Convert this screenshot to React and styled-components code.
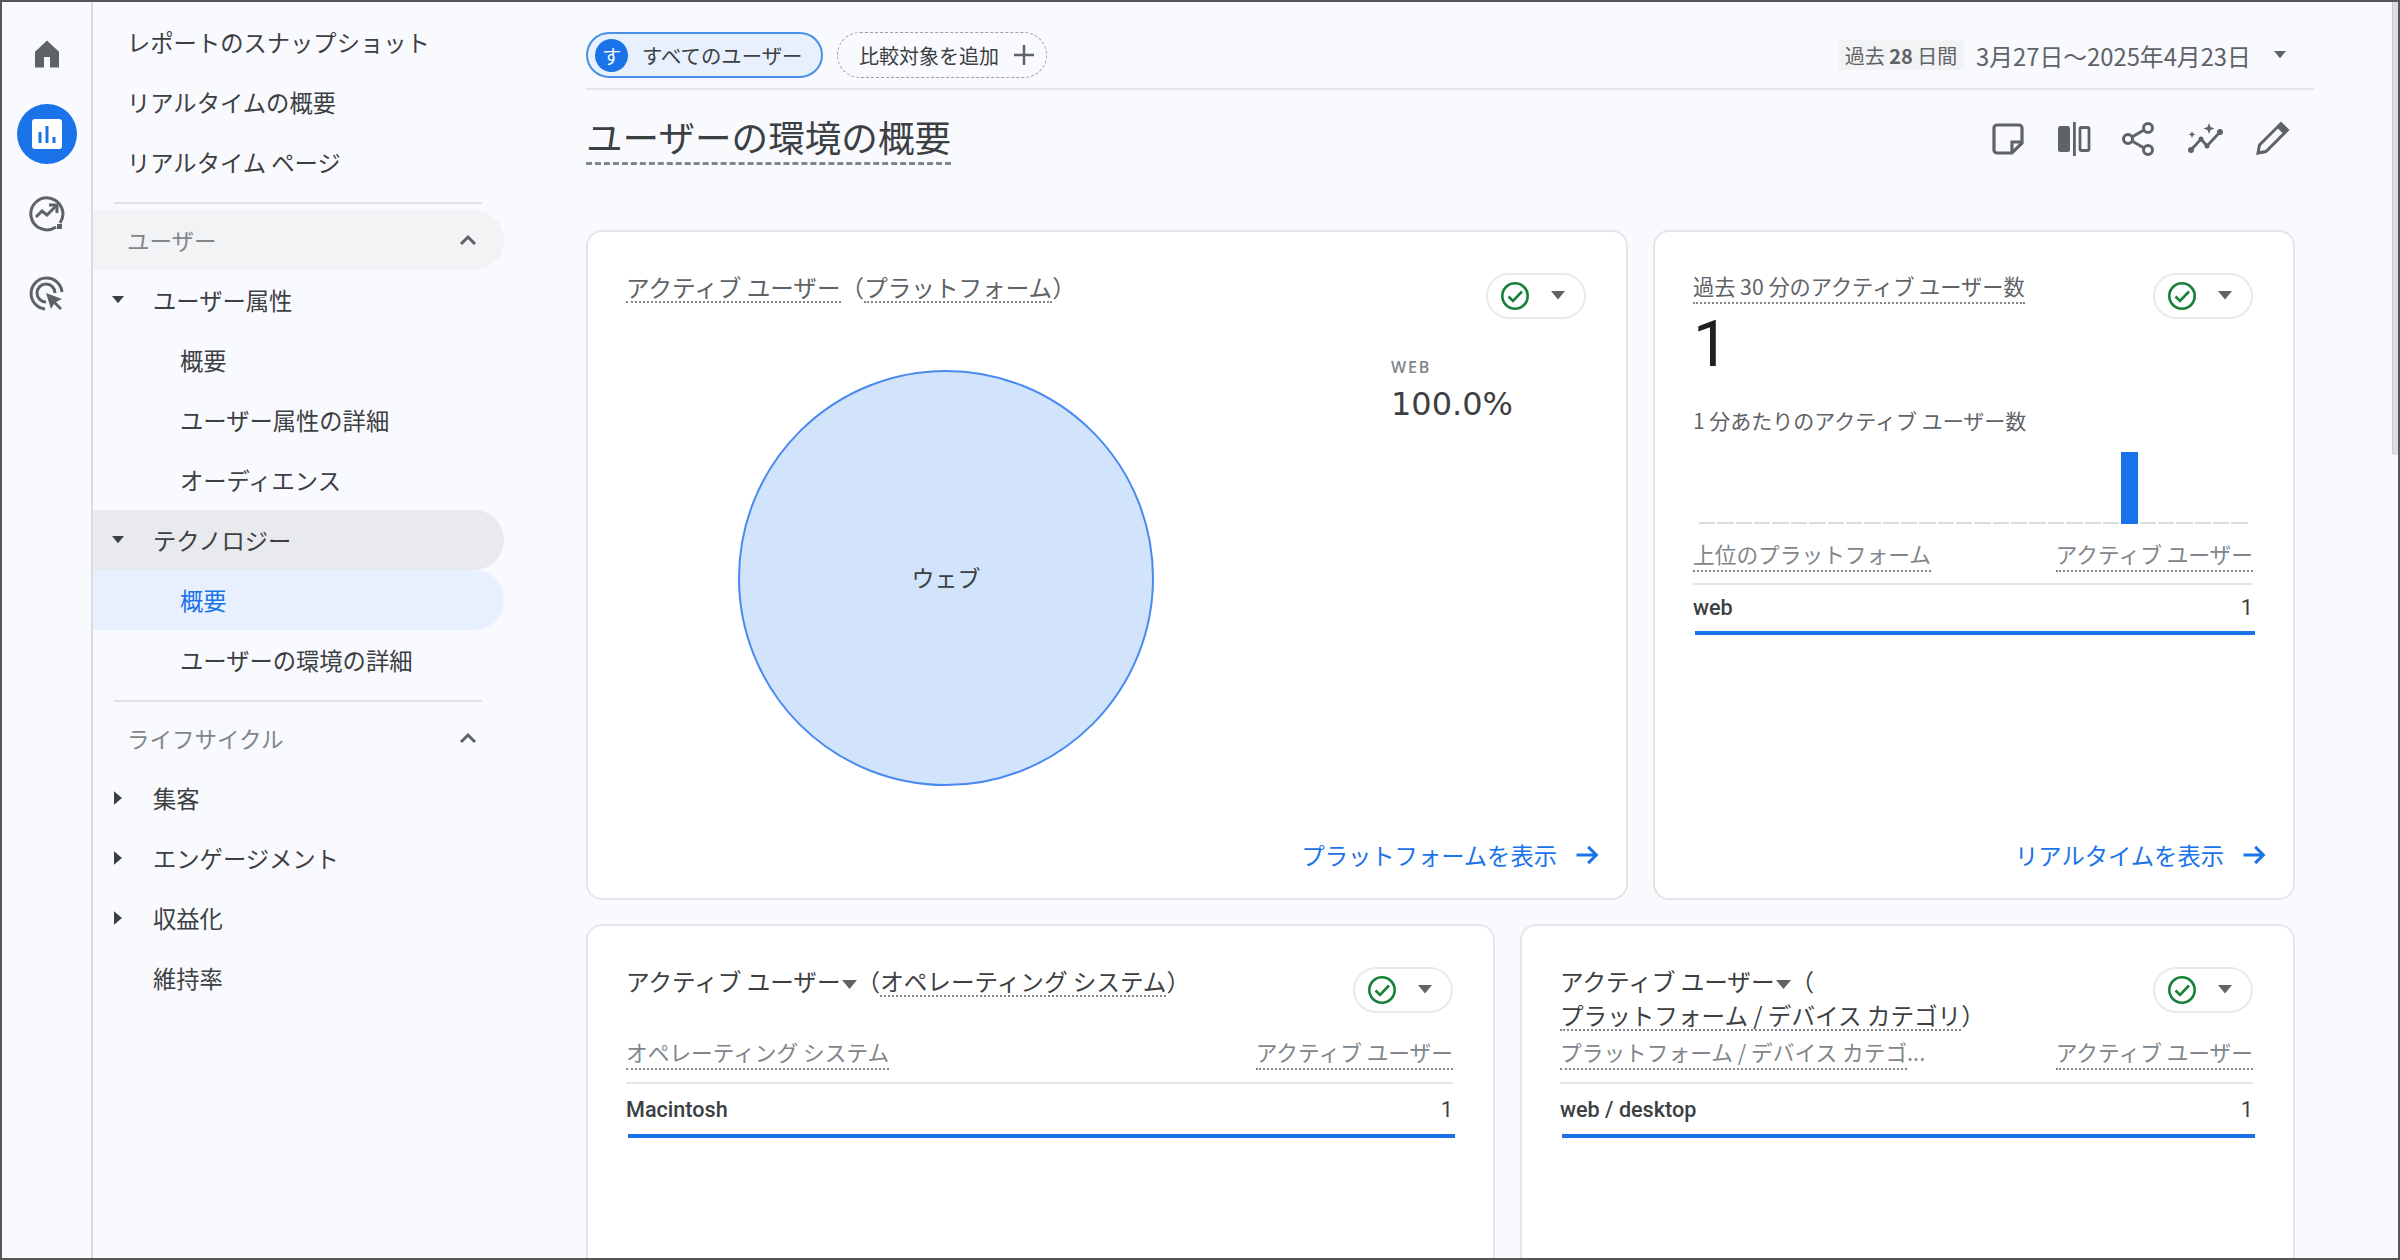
import React from 'react';
import styled, { createGlobalStyle } from 'styled-components';

const Global = createGlobalStyle`
  html, body { margin: 0; padding: 0; background: #f9fafd; }
  * { box-sizing: border-box; }
  body { font-family: "Roboto", "Noto Sans CJK JP", sans-serif; color: #3c4043; }
`;

const Frame = styled.div`
  width: 2400px; height: 1260px; border: 2px solid #565656; background: #f9fafd;
  display: flex; overflow: hidden; position: relative;
`;
const Rail = styled.aside`
  width: 91px; flex: none; border-right: 2px solid #dadce0; padding-top: 12px;
  display: flex; flex-direction: column;
`;
const RailItem = styled.div`
  height: 80px; display: flex; align-items: center; justify-content: center; color: #5f6368;
`;
const RailActive = styled.div`
  width: 60px; height: 60px; border-radius: 50%; background: #1a73e8;
  display: flex; align-items: center; justify-content: center;
`;
const Nav = styled.nav`
  width: 411px; flex: none; padding-top: 10px; font-size: 23.3px;
  font-family: "Noto Sans CJK JP", sans-serif;
`;
const NavRow = styled.div`
  height: 60px; display: flex; align-items: center; padding-left: ${p => p.$indent}px; padding-right: 26px;
  border-radius: 0 30px 30px 0; background: ${p => p.$bg || 'transparent'}; color: ${p => p.$color || '#3c4043'};
  white-space: nowrap;
`;
const SectionRow = styled(NavRow)`
  justify-content: space-between; color: #80868b; font-size: 22.5px;
`;
const CaretSlot = styled.span`
  width: 16px; margin-right: 27px; display: flex; justify-content: center; color: #3c4043;
`;
const NavDivider = styled.div`
  height: 2px; margin: ${p => p.$top}px 22px ${p => p.$bottom}px 21px; background: #dfe1e5;
`;
const Main = styled.main`
  flex: 1; min-width: 0; padding-left: 82px; position: relative;
`;
const TopBar = styled.div`
  width: 1728px; height: 88px; border-bottom: 2px solid #e3e5e8; display: flex; align-items: center;
  padding-top: 20px; font-family: "Noto Sans CJK JP", sans-serif;
`;
const Chip = styled.div`
  height: 46px; display: flex; align-items: center; border-radius: 23px; font-size: 20px; white-space: nowrap;
`;
const UserChip = styled(Chip)`
  width: 237px; border: 2px solid #4a8fe7; background: #e8f0fe; padding-left: 7px; font-size: 20.4px;
`;
const Avatar = styled.span`
  width: 33px; height: 33px; border-radius: 50%; background: #1a73e8; color: #fff; font-size: 19px;
  display: flex; align-items: center; justify-content: center; margin-right: 14px;
`;
const AddChip = styled(Chip)`
  width: 210px; margin-left: 14px; border: 1.5px dashed #9aa0a6; padding-left: 21px; gap: 14px;
`;
const DateBox = styled.div`
  margin-left: auto; display: flex; align-items: center; padding-right: 28px;
`;
const DateBadge = styled.span`
  background: #f1f3f4; color: #5f6368; height: 30px; width: 126px; font-size: 20px; display: flex;
  align-items: center; justify-content: center; white-space: nowrap;
`;
const DateText = styled.span`
  margin-left: 12px; font-size: 23.8px; color: #5f6368; white-space: nowrap; width: 298px;
`;
const TitleRow = styled.div`
  width: 1728px; height: 140px; padding: 23px 24px 0 0; display: flex; justify-content: space-between; align-items: flex-start;
`;
const Title = styled.h1`
  margin: 0; font-size: 36.6px; line-height: 48px; font-weight: 400; color: #3c4043; border-bottom: 3px dashed #80868b;
  font-family: "Noto Sans CJK JP", sans-serif; white-space: nowrap; height: 52px;
`;
const Tools = styled.div`
  display: flex; gap: 29.500px; height: 48px; margin-top: 1.500px; align-items: center; color: #5f6368;
`;
const CardRow = styled.div`
  display: flex; gap: 25px; margin-bottom: 24px; width: 1709px;
`;
const Card = styled.section`
  width: ${p => p.$w}px; height: ${p => p.$h}px; flex: none; background: #fff; border: 2px solid #e3e5e8; border-radius: 16px;
  padding: 39px 40px 0 38px; display: flex; flex-direction: column; font-family: "Noto Sans CJK JP", sans-serif;
`;
const Head = styled.div`
  display: flex; justify-content: space-between; align-items: flex-start; height: ${p => p.$h ? p.$h + 'px' : 'auto'}; flex: none;
`;
const CardTitle = styled.div`
  margin-top: -1.500px; font-size: 23.6px; line-height: 34px; color: ${p => p.$color || '#5f6368'}; white-space: nowrap;
`;
const TitleLine = styled.span`
  display: inline-block; line-height: 27px; border-bottom: 2px dotted #80868b;
`;
const Dotted = styled.span`
  border-bottom: 2px dotted #80868b; padding-bottom: 1px;
`;
const InlineCaret = styled.span`
  display: inline-flex; margin-left: 1px; vertical-align: 2px; color: #5f6368;
`;
const StatusPill = styled.div`
  width: 100px; height: 46px; flex: none; margin-top: 1.500px; border: 2px solid #e8eaed; border-radius: 23px; display: flex; align-items: center;
  padding-left: 12px; gap: 21px; color: #5f6368;
`;
const PieBody = styled.div`
  display: flex; align-items: flex-start; margin-top: 38.500px; padding-left: 112px;
`;
const Pie = styled.div`
  width: 416px; height: 416px; flex: none; margin-top: 13px; border-radius: 50%; background: #d2e3fc; border: 2px solid #4a8af0;
  display: flex; align-items: center; justify-content: center; font-size: 23px; color: #3c4043;
  padding-bottom: 2px;
`;
const Legend = styled.div`
  margin-left: 237px; display: flex; flex-direction: column; font-family: "DejaVu Sans", sans-serif;
`;
const LegendLabel = styled.span`
  font-family: "Open Sans", sans-serif; font-size: 16px; line-height: 20px; letter-spacing: 1.800px; font-weight: 600; color: #80868b;
`;
const LegendValue = styled.span`
  font-size: 32px; line-height: 54px; color: #3c4043; white-space: nowrap;
`;
const FootLink = styled.a`
  margin-top: auto; align-self: flex-end; height: 40px; margin-bottom: 23px; margin-right: -15px; display: flex; align-items: center;
  gap: 16px; font-size: 23.3px; color: #1a73e8; white-space: nowrap;
`;
const SideTitle = styled.div`
  font-size: 21.2px; line-height: 30px; color: #5f6368; white-space: nowrap;
`;
const BigValue = styled.div`
  font-size: 64px; line-height: 70px; margin-top: 9px; font-weight: 400; color: #202124; font-family: "Roboto", sans-serif;
`;
const SubTitle = styled.div`
  margin-top: 25px; font-size: 21px; line-height: 30px; color: #5f6368; white-space: nowrap;
`;
const BarChart = styled.div`
  margin: 16px 0 0 6px; width: 549px; height: 73px; display: flex; align-items: flex-end; gap: 2px;
`;
const MiniBar = styled.div`
  flex: 1; height: ${p => (p.$on ? 72 : 2)}px; background: ${p => (p.$on ? '#1a73e8' : '#dadce0')};
`;
const Table = styled.div`
  margin-top: ${p => p.$top || 0}px; width: 100%;
`;
const TableHead = styled.div`
  display: flex; justify-content: space-between; padding-bottom: 10px; border-bottom: 2px solid #e3e5e8; height: ${p => p.$h}px;
`;
const HeadCell = styled.span`
  font-size: 21.7px; line-height: 30px; height: 33px; color: #80868b; border-bottom: 2px dotted #80868b; white-space: nowrap;
`;
const HeadOverflow = styled.span`
  display: inline-block; width: 0;
`;
const TableRow = styled.div`
  height: ${p => p.$h}px; display: flex; justify-content: space-between; align-items: center; font-family: "Roboto", sans-serif;
  font-size: 21.600px; color: #3c4043;
`;
const RowKey = styled.span`font-weight: 500;`;
const TableBar = styled.div`
  height: 4px; background: #1a73e8; width: 100%; margin-left: 2px;
`;
const Scrollbar = styled.div`
  position: absolute; top: 0; right: 0; width: 6px; height: 453px; background: #dcdde0; border-left: 1px solid #c8cacd; border-radius: 0 0 0 3px;
`;

const Down = ({ s = 12, c = 'currentColor' }) => (
  <svg width={s} height={s * 0.6} viewBox="0 0 10 6"><path d="M0 0h10L5 6z" fill={c} /></svg>
);
const Right = () => <svg width="8" height="14" viewBox="0 0 6 10"><path d="M0 0v10l6-5z" fill="#3c4043" /></svg>;
const Chevron = () => (
  <svg width="20" height="14" viewBox="0 0 20 14" fill="none" stroke="#5f6368" strokeWidth="3"><path d="M3 11l7-7 7 7" /></svg>
);
const Check = () => (
  <svg width="30" height="30" viewBox="0 0 30 30" fill="none" stroke="#188038" strokeWidth="2.6">
    <circle cx="15" cy="15" r="12.7" /><path d="M8.5 15.5l4.5 4.5 9-9.5" />
  </svg>
);
const Arrow = ({ color = '#1a73e8' }) => (
  <svg width="28" height="28" viewBox="0 0 24 24" fill="none" stroke={color} strokeWidth="2.6"><path d="M3 12h17M13 5l7 7-7 7" /></svg>
);
const Status = () => (
  <StatusPill><Check /><Down s={14} /></StatusPill>
);

const HomeIcon = () => (
  <svg width="36" height="36" viewBox="0 0 24 24"><path d="M4 21V10.5L12 3l8 7.500V21h-6v-7h-4v7z" fill="#5f6368" /></svg>
);
const ReportIcon = () => (
  <svg width="32" height="32" viewBox="0 0 32 32">
    <rect x="1" y="1" width="30" height="30" rx="3" fill="#fff" />
    <rect x="7.500" y="14" width="3" height="11" fill="#1a73e8" /><rect x="14.500" y="8" width="3" height="17" fill="#1a73e8" /><rect x="21.500" y="19" width="3" height="6" fill="#1a73e8" />
  </svg>
);
const ExploreIcon = () => (
  <svg width="36" height="36" viewBox="0 0 36 36" fill="none" stroke="#5f6368" strokeWidth="3">
    <path d="M31 27A16 16 0 1 0 27 31" /><path d="M7 21l6-6 5 4 9-9" /><path d="M20 9h8v8" /><rect x="28" y="28" width="5" height="5" fill="#5f6368" stroke="none" />
  </svg>
);
const AdsIcon = () => (
  <svg width="36" height="36" viewBox="0 0 36 36" fill="none" stroke="#5f6368" strokeWidth="3">
    <path d="M33 16A15.500 15.500 0 1 0 16 33" /><path d="M26 17a9 9 0 1 0-9 9" />
    <path d="M17 17l16 6-6 3 6 6-2 2-6-6-3 5z" fill="#5f6368" stroke="none" />
  </svg>
);
const NoteIcon = () => (
  <svg width="36" height="36" viewBox="0 0 36 36" fill="none" stroke="#5f6368" strokeWidth="3.2">
    <path d="M4 7a3 3 0 0 1 3-3h22a3 3 0 0 1 3 3v15l-10 10H7a3 3 0 0 1-3-3z" /><path d="M32 21h-10v11" />
  </svg>
);
const CompareIcon = () => (
  <svg width="36" height="36" viewBox="0 0 36 36">
    <rect x="2" y="5" width="12" height="26" rx="2.500" fill="#5f6368" />
    <rect x="17" y="1" width="2.800" height="34" fill="#5f6368" />
    <rect x="24" y="6.500" width="9" height="23" rx="1.500" fill="none" stroke="#5f6368" strokeWidth="2.800" />
  </svg>
);
const ShareIcon = () => (
  <svg width="36" height="36" viewBox="0 0 36 36" fill="none" stroke="#5f6368" strokeWidth="3">
    <circle cx="27" cy="7" r="4.500" /><circle cx="7" cy="18" r="4.500" /><circle cx="27" cy="29" r="4.500" />
    <path d="M11 16l12-7M11 20l12 7" />
  </svg>
);
const InsightIcon = () => (
  <svg width="38" height="36" viewBox="0 0 38 36" fill="none" stroke="#5f6368" strokeWidth="2.800">
    <path d="M4 29l10-11 6 7 13-14" />
    <g fill="#5f6368" stroke="none">
      <circle cx="4" cy="29" r="3" /><circle cx="33" cy="11" r="3" /><circle cx="14" cy="18" r="2.500" /><circle cx="20" cy="25" r="2.500" />
      <path d="M22 2l1.500 4 4 1.500-4 1.500-1.500 4-1.500-4-4-1.500 4-1.500zM5 10l1 2.500 2.500 1-2.500 1-1 2.500-1-2.500-2.500-1 2.500-1z" />
    </g>
  </svg>
);
const PencilIcon = () => (
  <svg width="36" height="36" viewBox="0 0 36 36" fill="none" stroke="#5f6368" strokeWidth="3">
    <path d="M4 32l1.500-8L24 5.500l6.500 6.500L12 30.500z" /><path d="M25 4.500l2-2 6.500 6.500-2 2z" fill="#5f6368" />
  </svg>
);

const bars = Array.from({ length: 30 }, (_, i) => i === 23);

const DataTable = ({ top, left, right, rowKey, rowH = 50, headH = 47.5, overflow }) => (
  <Table $top={top}>
    <TableHead $h={headH}>
      <HeadCell>{left}{overflow && <HeadOverflow>{overflow}</HeadOverflow>}</HeadCell>
      <HeadCell>{right}</HeadCell>
    </TableHead>
    <TableRow $h={rowH}><RowKey>{rowKey}</RowKey><span>1</span></TableRow>
    <TableBar />
  </Table>
);

export default function App() {
  return (
    <>
      <Global />
      <Frame>
        <Rail>
          <RailItem><HomeIcon /></RailItem>
          <RailItem><RailActive><ReportIcon /></RailActive></RailItem>
          <RailItem><ExploreIcon /></RailItem>
          <RailItem><AdsIcon /></RailItem>
        </Rail>
        <Nav>
          <NavRow $indent={34}>レポートのスナップショット</NavRow>
          <NavRow $indent={34}>リアルタイムの概要</NavRow>
          <NavRow $indent={34}>リアルタイム ページ</NavRow>
          <NavDivider $top={10} $bottom={6} />
          <SectionRow $indent={34} $bg="#f1f3f4">ユーザー<Chevron /></SectionRow>
          <NavRow $indent={17}><CaretSlot><Down /></CaretSlot>ユーザー属性</NavRow>
          <NavRow $indent={87}>概要</NavRow>
          <NavRow $indent={87}>ユーザー属性の詳細</NavRow>
          <NavRow $indent={87}>オーディエンス</NavRow>
          <NavRow $indent={17} $bg="#e8eaed"><CaretSlot><Down /></CaretSlot>テクノロジー</NavRow>
          <NavRow $indent={87} $bg="#e8f0fe" $color="#1a73e8">概要</NavRow>
          <NavRow $indent={87}>ユーザーの環境の詳細</NavRow>
          <NavDivider $top={10} $bottom={6} />
          <SectionRow $indent={34}>ライフサイクル<Chevron /></SectionRow>
          <NavRow $indent={17}><CaretSlot><Right /></CaretSlot>集客</NavRow>
          <NavRow $indent={17}><CaretSlot><Right /></CaretSlot>エンゲージメント</NavRow>
          <NavRow $indent={17}><CaretSlot><Right /></CaretSlot>収益化</NavRow>
          <NavRow $indent={60}>維持率</NavRow>
        </Nav>
        <Main>
          <TopBar>
            <UserChip><Avatar>す</Avatar>すべてのユーザー</UserChip>
            <AddChip>比較対象を追加
              <svg width="22" height="22" viewBox="0 0 22 22" stroke="#5f6368" strokeWidth="2.500"><path d="M11 1v20M1 11h20" /></svg>
            </AddChip>
            <DateBox>
              <DateBadge>過去 <b>&nbsp;28&nbsp;</b> 日間</DateBadge>
              <DateText>3月27日～2025年4月23日</DateText>
              <Down s={12} c="#5f6368" />
            </DateBox>
          </TopBar>
          <TitleRow>
            <Title>ユーザーの環境の概要</Title>
            <Tools><NoteIcon /><CompareIcon /><ShareIcon /><InsightIcon /><PencilIcon /></Tools>
          </TitleRow>
          <CardRow>
            <Card $w={1042} $h={670}>
              <Head>
                <CardTitle><TitleLine>アクティブ ユーザー</TitleLine>（<TitleLine>プラットフォーム</TitleLine>）</CardTitle>
                <Status />
              </Head>
              <PieBody>
                <Pie>ウェブ</Pie>
                <Legend><LegendLabel>WEB</LegendLabel><LegendValue>100.0%</LegendValue></Legend>
              </PieBody>
              <FootLink>プラットフォームを表示<Arrow /></FootLink>
            </Card>
            <Card $w={642} $h={670}>
              <Head>
                <div>
                  <SideTitle><Dotted>過去 30 分のアクティブ ユーザー数</Dotted></SideTitle>
                  <BigValue>1</BigValue>
                </div>
                <Status />
              </Head>
              <SubTitle>1 分あたりのアクティブ ユーザー数</SubTitle>
              <BarChart>{bars.map((on, i) => <MiniBar key={i} $on={on} />)}</BarChart>
              <DataTable top={15} headH={46} rowH={45.5} left="上位のプラットフォーム" right="アクティブ ユーザー" rowKey="web" />
              <FootLink>リアルタイムを表示<Arrow /></FootLink>
            </Card>
          </CardRow>
          <CardRow>
            <Card $w={909} $h={400}>
              <Head $h={71.5}>
                <CardTitle $color="#3c4043">アクティブ ユーザー<InlineCaret><Down s={15} /></InlineCaret>（<TitleLine>オペレーティング システム</TitleLine>）</CardTitle>
                <Status />
              </Head>
              <DataTable left="オペレーティング システム" right="アクティブ ユーザー" rowKey="Macintosh" />
            </Card>
            <Card $w={775} $h={400}>
              <Head $h={71.5}>
                <CardTitle $color="#3c4043">アクティブ ユーザー<InlineCaret><Down s={15} /></InlineCaret>（<br /><TitleLine>プラットフォーム / デバイス カテゴリ</TitleLine>）</CardTitle>
                <Status />
              </Head>
              <DataTable left="プラットフォーム / デバイス カテゴ" overflow="..." right="アクティブ ユーザー" rowKey="web / desktop" />
            </Card>
          </CardRow>
          <Scrollbar />
        </Main>
      </Frame>
    </>
  );
}
